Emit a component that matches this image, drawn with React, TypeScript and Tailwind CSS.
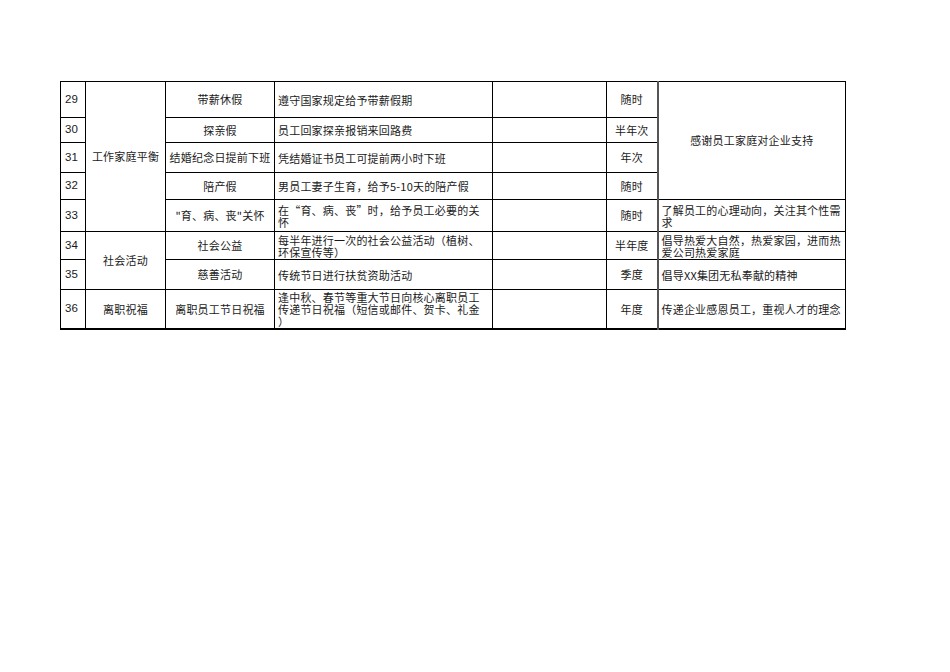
import React from "react"

const td = "border border-black align-middle p-0"

function Lines({ lines }: { lines: string[] }) {
    return (
        <div className="px-[3px] leading-[12px]">
            {lines.map((l, i) => (
                <div key={i} className="whitespace-nowrap">
                    {l}
                </div>
            ))}
        </div>
    )
}

type Row = {
    n: number
    h: string
    item: string
    desc: string[]
    freq: string
}

const rows: Row[] = [
    { n: 29, h: "h-[36px]", item: "带薪休假", desc: ["遵守国家规定给予带薪假期"], freq: "随时" },
    { n: 30, h: "h-[25px]", item: "探亲假", desc: ["员工回家探亲报销来回路费"], freq: "半年次" },
    { n: 31, h: "h-[30px]", item: "结婚纪念日提前下班", desc: ["凭结婚证书员工可提前两小时下班"], freq: "年次" },
    { n: 32, h: "h-[27px]", item: "陪产假", desc: ["男员工妻子生育，给予5-10天的陪产假"], freq: "随时" },
    { n: 33, h: "h-[32px]", item: "\"育、病、丧\"关怀", desc: ["在“育、病、丧”时，给予员工必要的关", "怀"], freq: "随时" },
    { n: 34, h: "h-[28px]", item: "社会公益", desc: ["每半年进行一次的社会公益活动（植树、", "环保宣传等）"], freq: "半年度" },
    { n: 35, h: "h-[30px]", item: "慈善活动", desc: ["传统节日进行扶贫资助活动"], freq: "季度" },
    { n: 36, h: "h-[39px]", item: "离职员工节日祝福", desc: ["逢中秋、春节等重大节日向核心离职员工", "传递节日祝福（短信或邮件、贺卡、礼金", "）"], freq: "年度" },
]

export default function App() {
    return (
        <div className="w-[950px] h-[672px] bg-white pt-[81px] pl-[60px] font-['Noto_Sans_CJK_SC','Noto_Sans',sans-serif]">
            <table className="w-[785px] table-fixed border-collapse text-[11px] text-[#1a1a1a] tracking-[0.2px] border-b-2 border-black">
                <colgroup>
                    <col className="w-[25px]" />
                    <col className="w-[80px]" />
                    <col className="w-[109px]" />
                    <col className="w-[218px]" />
                    <col className="w-[114px]" />
                    <col className="w-[51px]" />
                    <col className="w-[188px]" />
                </colgroup>
                <tbody>
                    {rows.map((r) => (
                        <tr key={r.n} className={r.h}>
                            <td className={`${td} pl-[4px] text-[11.5px] tracking-normal font-['Liberation_Sans',Arial,sans-serif]`}>
                                {r.n}
                            </td>
                            {r.n === 29 && (
                                <td rowSpan={5} className={`${td} text-center`}>
                                    工作家庭平衡
                                </td>
                            )}
                            {r.n === 34 && (
                                <td rowSpan={2} className={`${td} text-center`}>
                                    社会活动
                                </td>
                            )}
                            {r.n === 36 && <td className={`${td} text-center`}>离职祝福</td>}
                            <td className={`${td} text-center whitespace-nowrap`}>{r.item}</td>
                            <td className={td}>
                                <Lines lines={r.desc} />
                            </td>
                            <td className={td}></td>
                            <td className={`${td} text-center border-r-2 border-r-[#555]`}>{r.freq}</td>
                            {r.n === 29 && (
                                <td rowSpan={4} className={`${td} text-center`}>
                                    感谢员工家庭对企业支持
                                </td>
                            )}
                            {r.n === 33 && (
                                <td className={td}>
                                    <Lines lines={["了解员工的心理动向，关注其个性需", "求"]} />
                                </td>
                            )}
                            {r.n === 34 && (
                                <td className={td}>
                                    <Lines lines={["倡导热爱大自然，热爱家园，进而热", "爱公司热爱家庭"]} />
                                </td>
                            )}
                            {r.n === 35 && (
                                <td className={td}>
                                    <Lines lines={["倡导XX集团无私奉献的精神"]} />
                                </td>
                            )}
                            {r.n === 36 && (
                                <td className={td}>
                                    <Lines lines={["传递企业感恩员工，重视人才的理念"]} />
                                </td>
                            )}
                        </tr>
                    ))}
                </tbody>
            </table>
        </div>
    )
}
